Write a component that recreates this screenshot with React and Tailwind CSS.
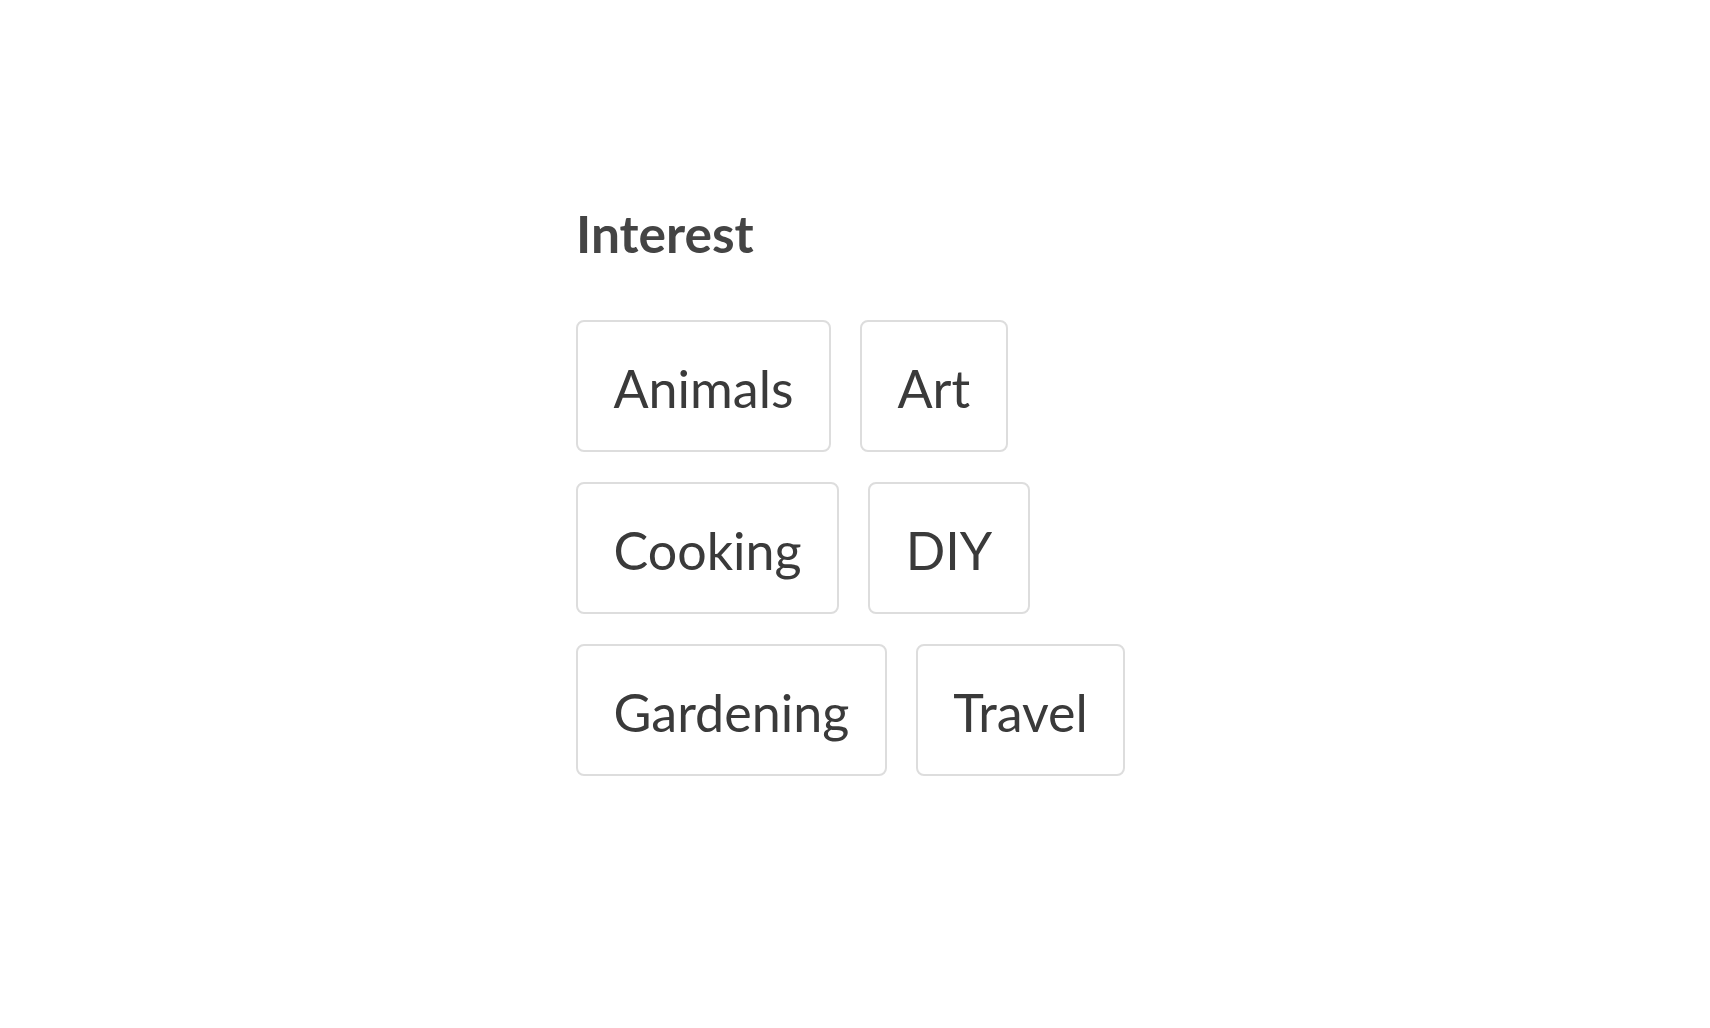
import React from "react";

const items = [["Animals", "Art"], ["Cooking", "DIY"], ["Gardening", "Travel"]];

export default function App() {
  return (
    <div className="min-h-screen w-full bg-white" style={{ fontFamily: "Lato, 'Open Sans', sans-serif" }}>
      <div className="ml-[576px] pt-[208px] w-[600px]">
        <h2 className="text-[51.5px] leading-none font-bold text-[#444444]">Interest</h2>
        <div className="mt-[60px] flex flex-col gap-[30px]">
          {items.map((row, i) => (
            <div key={i} className="flex gap-[29px]">
              {row.map((t) => (
                <button
                  key={t}
                  type="button"
                  className="border-2 border-[#dddddd] rounded-lg bg-white px-[35.5px] pt-[36px] pb-[32px] text-[52px] leading-[60px] text-[#3a3a3a] font-normal"
                >
                  {t}
                </button>
              ))}
            </div>
          ))}
        </div>
      </div>
    </div>
  );
}
